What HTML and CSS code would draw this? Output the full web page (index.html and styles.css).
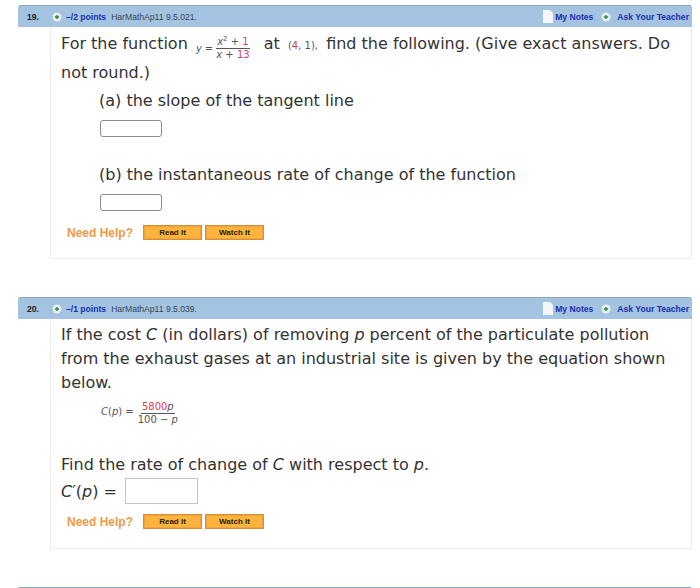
FILE: index.html
```html
<!DOCTYPE html>
<html lang="en">
<head>
  <meta charset="UTF-8">
  <title>Questions</title>
  <link rel="stylesheet" href="styles.css">
</head>
<body>
  <div class="question q19">
    <div class="q-header">
      <span class="q-num">19.</span>
      <svg class="plus" viewBox="0 0 12 12"><circle cx="6" cy="6" r="5.5" fill="#e8eef0"/><path d="M6 3.5v5M3.5 6h5" stroke="#2a8a3a" stroke-width="1.6"/></svg>
      <span class="points">–/2 points</span>
      <span class="ref">HarMathAp11 9.5.021.</span>
      <span class="links">
        <svg class="note" viewBox="0 0 10 13"><path d="M0 0h7l3 3v10H0z" fill="#f4f7fa"/></svg>
        <span class="link">My Notes</span>
        <svg class="plus" viewBox="0 0 12 12"><circle cx="6" cy="6" r="5.5" fill="#e8eef0"/><path d="M6 3.5v5M3.5 6h5" stroke="#2a8a3a" stroke-width="1.6"/></svg>
        <span class="link">Ask Your Teacher</span>
      </span>
    </div>
    <div class="q-body">
      <p class="line">For the function
        <span class="math eq">
          <i>y</i> =
          <span class="frac"><span class="top"><i>x</i><sup>2</sup> + <b>1</b></span><span class="bot"><i>x</i> + <b>13</b></span></span>
        </span>
        at <span class="math point">(<b>4</b>, 1),</span> find the following. (Give exact answers. Do not round.)</p>
      <p class="part part-a">(a) the slope of the tangent line</p>
      <div class="answer round"></div>
      <p class="part part-b">(b) the instantaneous rate of change of the function</p>
      <div class="answer round"></div>
      <div class="help">
        <span class="need">Need Help?</span>
        <span class="btn">Read It</span>
        <span class="btn">Watch It</span>
      </div>
    </div>
  </div>

  <div class="question q20">
    <div class="q-header">
      <span class="q-num">20.</span>
      <svg class="plus" viewBox="0 0 12 12"><circle cx="6" cy="6" r="5.5" fill="#e8eef0"/><path d="M6 3.5v5M3.5 6h5" stroke="#2a8a3a" stroke-width="1.6"/></svg>
      <span class="points">–/1 points</span>
      <span class="ref">HarMathAp11 9.5.039.</span>
      <span class="links">
        <svg class="note" viewBox="0 0 10 13"><path d="M0 0h7l3 3v10H0z" fill="#f4f7fa"/></svg>
        <span class="link">My Notes</span>
        <svg class="plus" viewBox="0 0 12 12"><circle cx="6" cy="6" r="5.5" fill="#e8eef0"/><path d="M6 3.5v5M3.5 6h5" stroke="#2a8a3a" stroke-width="1.6"/></svg>
        <span class="link">Ask Your Teacher</span>
      </span>
    </div>
    <div class="q-body">
      <p class="line tight">If the cost <i>C</i> (in dollars) of removing <i>p</i> percent of the particulate pollution from the exhaust gases at an industrial site is given by the equation shown below.</p>
      <div class="math formula">
        <span class="lhs"><i>C</i>(<i>p</i>) =</span>
        <span class="frac"><span class="top"><b>5800</b><i>p</i></span><span class="bot">100 − <i>p</i></span></span>
      </div>
      <p class="line find">Find the rate of change of <i>C</i> with respect to <i>p</i>.</p>
      <div class="entry">
        <span><i>C</i>′(<i>p</i>) =</span>
        <div class="answer square"></div>
      </div>
      <div class="help">
        <span class="need">Need Help?</span>
        <span class="btn">Read It</span>
        <span class="btn">Watch It</span>
      </div>
    </div>
  </div>

  <div class="question next">
    <div class="q-header"></div>
  </div>
</body>
</html>
```

FILE: styles.css
```css
html {
  height: 100%;
  overflow: hidden;
}

body {
  margin: 0;
  padding: 5px 8px 0 18px;
  background-color: #fff;
  font-family: "DejaVu Sans", sans-serif;
  color: #333;
  font-size: 16px;
}

.question {
  margin-bottom: 38px;
}

.q-header {
  display: flex;
  align-items: center;
  height: 21px;
  background-color: #a3c3e0;
  border-top: 1px solid #8ba6bf;
  border-radius: 3px 3px 0 0;
  font-family: "Liberation Sans", sans-serif;
  font-size: 8.6px;
  color: #34465a;
}

/* only the top edge of the next question is in view */
.next {
  margin-bottom: 0;
}

.next .q-header {
  height: 1px;
}

.q-num {
  width: 34px;
  padding-left: 9px;
  box-sizing: border-box;
  font-weight: bold;
  color: #222;
}

.plus {
  width: 10px;
  height: 10px;
  margin-right: 4px;
}

.points {
  margin-right: 5px;
  font-weight: bold;
  color: #1a2fb0;
}

.links {
  display: flex;
  align-items: center;
  margin-left: auto;
  padding-right: 3px;
}

.note {
  width: 10px;
  height: 13px;
  margin-right: 2px;
}

.link {
  font-weight: bold;
  color: #1a2fb0;
}

.link + .plus {
  margin-left: 8px;
  margin-right: 6px;
}

.q-body {
  box-sizing: border-box;
  margin-left: 32px;
  padding: 2px 20px 0 10px;
  border: 1px solid #ececec;
  border-top: 0;
}

.q19 .q-body {
  height: 232px;
}

.q20 .q-body {
  height: 230px;
}

p {
  margin: 0;
}

.line {
  line-height: 29px;
}

.tight {
  margin-top: 2px;
  line-height: 24px;
}

.part {
  margin-left: 38px;
  line-height: 26px;
}

.part-a {
  margin-top: 1px;
}

.part-b {
  margin-top: 25px;
}

.math {
  font-size: 10px;
  line-height: 1;
  color: #555;
}

.math b {
  font-weight: normal;
  color: #d9414b;
}

.eq {
  display: inline-flex;
  align-items: center;
  gap: 3px;
  margin: -2px 9px -10px 3px;
  vertical-align: middle;
}

.frac {
  display: inline-flex;
  flex-direction: column;
  align-items: center;
  line-height: 12px;
}

.frac .top {
  padding: 0 1px;
  border-bottom: 1px solid #555;
}

.frac sup {
  font-size: 7px;
  line-height: 0;
}

.point {
  margin: 0 3px;
}

.answer {
  background-color: #fff;
  box-sizing: border-box;
}

.round {
  width: 62px;
  height: 17px;
  margin: 6px 0 0 39px;
  border: 1px solid #8c8c8c;
  border-radius: 3px;
}

.square {
  width: 73px;
  height: 26px;
  border: 1px solid #c4c4c4;
}

.formula {
  display: flex;
  align-items: center;
  gap: 4px;
  margin: 6px 0 0 40px;
}

.lhs {
  margin-bottom: 3px;
}

.find {
  margin-top: 26px;
  line-height: 26px;
}

.entry {
  display: flex;
  align-items: center;
  gap: 8px;
}

.help {
  display: flex;
  align-items: center;
  gap: 3px;
  margin: 10px 0 0 6px;
  font-family: "Liberation Sans", sans-serif;
}

.q19 .help {
  margin-top: 14px;
}

.need {
  margin-right: 7px;
  font-size: 12px;
  font-weight: bold;
  color: #ee9a45;
}

.btn {
  width: 59px;
  height: 15px;
  box-sizing: border-box;
  border: 1px solid #d98f33;
  box-shadow: inset 0 0 0 1px #f0a23c;
  background-color: #fcb43e;
  font-size: 8px;
  font-weight: bold;
  line-height: 13px;
  text-align: center;
  color: #2e2208;
}
```
